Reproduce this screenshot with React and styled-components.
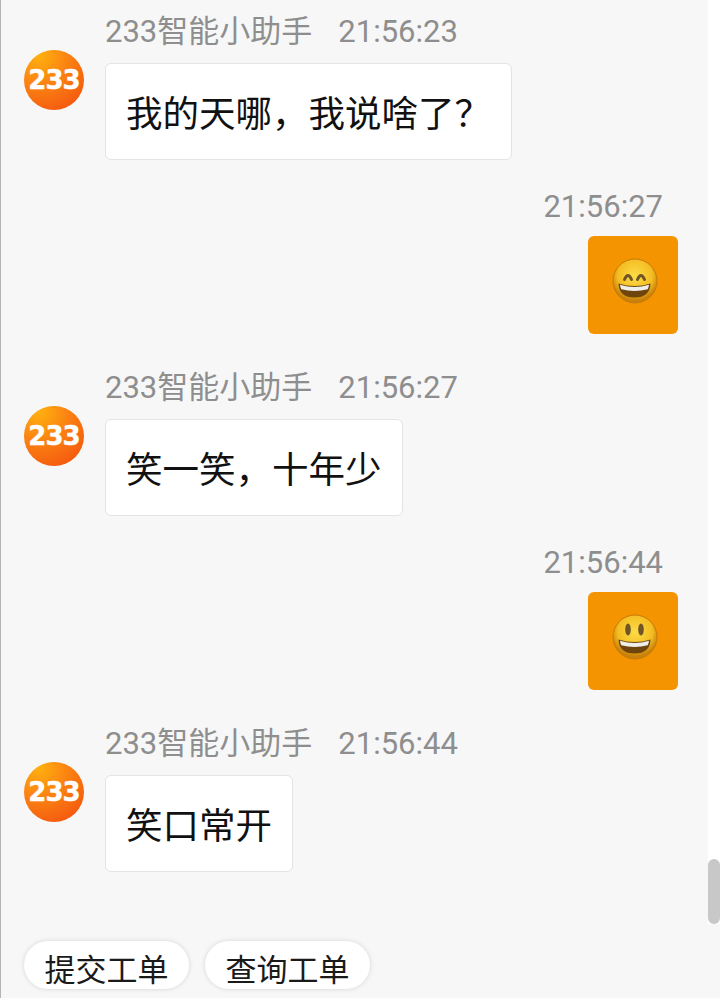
import React from "react";
import styled, { createGlobalStyle } from "styled-components";

const Global = createGlobalStyle`
  html, body { margin: 0; padding: 0; background: #f7f7f7; }
  body { width: 720px; height: 998px; overflow: hidden; font-family: Roboto, "Noto Sans CJK SC", sans-serif; }
`;

const Page = styled.div`
  position: relative;
  width: 720px;
  height: 998px;
  box-sizing: border-box;
  overflow: hidden;
  background: #f7f7f7;
  border-left: 1px solid #b4b4b4;
  display: flex;
  flex-direction: column;
`;

const Thread = styled.div`
  display: flex;
  flex-direction: column;
  height: 941px;
  box-sizing: border-box;
  padding: 12px 0 0 23px;
`;

const BotRow = styled.div`
  display: flex;
  gap: 21px;
  height: 174px;
`;

const AvatarWrap = styled.div`
  width: 60px;
  height: 60px;
  margin-top: 38px;
  flex: none;
`;

const AvatarDisc = styled.div`
  width: 60px;
  height: 60px;
  border-radius: 50%;
  background: radial-gradient(circle at 25% 10%, #ffb00f 0%, #fb8412 40%, #f4590f 85%);
  color: #fff;
  display: flex;
  align-items: center;
  justify-content: center;
  font: 700 26px/1 "DejaVu Sans", sans-serif;
  letter-spacing: -1px;
  -webkit-text-stroke: 0.4px #fff;
`;

const BotBody = styled.div`
  display: flex;
  flex-direction: column;
  align-items: flex-start;
`;

const Meta = styled.div`
  display: flex;
  gap: 26px;
  height: 39px;
  line-height: 39px;
  font-size: 31px;
  color: #8e8e8e;
  white-space: nowrap;
`;

const Bubble = styled.div`
  box-sizing: border-box;
  height: 97px;
  margin-top: 12px;
  padding: 0 20px;
  display: flex;
  align-items: center;
  background: #fff;
  border: 1px solid #e4e4e4;
  border-radius: 6px;
  font-size: 36.5px;
  color: #111;
  white-space: nowrap;
`;

const UserRow = styled.div`
  display: flex;
  flex-direction: column;
  align-items: flex-end;
  height: 182px;
  padding-right: 42px;
`;

const UserTime = styled.div`
  height: 39px;
  line-height: 39px;
  margin-top: 1px;
  margin-right: 15px;
  font-size: 31px;
  color: #8e8e8e;
`;

const EmojiBubble = styled.div`
  width: 90px;
  height: 98px;
  margin-top: 10px;
  border-radius: 6px;
  background: #f49400;
  display: flex;
  align-items: center;
  justify-content: center;
  padding: 0 0 8px 4px;
  box-sizing: border-box;
`;

const QuickBar = styled.div`
  display: flex;
  gap: 16px;
  padding-left: 23px;
`;

const QuickButton = styled.div`
  box-sizing: border-box;
  width: 165px;
  height: 48px;
  border-radius: 24px;
  background: #fff;
  box-shadow: 0 0 5px rgba(0, 0, 0, 0.14);
  font-size: 31px;
  line-height: 60px;
  text-align: center;
  color: #1a1a1a;
  overflow: hidden;
  white-space: nowrap;
`;

const ScrollTrack = styled.div`
  position: absolute;
  left: 707px;
  top: 0;
  width: 12px;
  height: 924px;
  background: #fff;
`;

const ScrollThumb = styled.div`
  position: absolute;
  left: 707px;
  top: 859px;
  width: 12px;
  height: 65px;
  border-radius: 6px;
  background: #c8c8c8;
`;

function Face({ kind, id }) {
  return (
    <svg width="46" height="46" viewBox="0 0 46 46">
      <defs>
        <radialGradient id={id} cx="50%" cy="38%" r="56%">
          <stop offset="0%" stopColor="#fddc48" />
          <stop offset="70%" stopColor="#f4bd22" />
          <stop offset="100%" stopColor="#c9800a" />
        </radialGradient>
        <filter id={`${id}-soft`} x="-10%" y="-10%" width="120%" height="120%">
          <feGaussianBlur stdDeviation="0.6" />
        </filter>
      </defs>
      <g filter={`url(#${id}-soft)`}>
        <circle cx="23" cy="23" r="22" fill={`url(#${id})`} stroke="#c47a08" strokeWidth="1" />
        {kind === "grin" ? (
          <g fill="none" stroke="#6f5526" strokeWidth="3" strokeLinecap="round">
            <path d="M12.500 21.500q3.500-8 7 0" />
            <path d="M25.500 21.500q3.500-8 7 0" />
          </g>
        ) : (
          <g fill="#6f5526">
            <ellipse cx="16" cy="15.500" rx="2.800" ry="6" />
            <ellipse cx="29" cy="15.500" rx="2.800" ry="6" />
          </g>
        )}
        <path d="M6.500 25.500q16 5 32 0q-.5 14-16 14T6.500 25.500z" fill="#6d4510" />
        <path d="M8 26.700q14.500 4.500 29 0q-.2 2.800-1.300 4.500q-13.200 3.500-26.400 0Q8.200 29.500 8 26.700z" fill="#eeeeea" />
      </g>
    </svg>
  );
}

function BotMessage({ time, text }) {
  return (
    <BotRow>
      <AvatarWrap>
        <AvatarDisc>233</AvatarDisc>
      </AvatarWrap>
      <BotBody>
        <Meta>
          <span>233智能小助手</span>
          <span>{time}</span>
        </Meta>
        <Bubble>{text}</Bubble>
      </BotBody>
    </BotRow>
  );
}

function UserMessage({ time, kind, id }) {
  return (
    <UserRow>
      <UserTime>{time}</UserTime>
      <EmojiBubble>
        <Face kind={kind} id={id} />
      </EmojiBubble>
    </UserRow>
  );
}

export default function App() {
  return (
    <Page>
      <Global />
      <Thread>
        <BotMessage time="21:56:23" text="我的天哪，我说啥了？" />
        <UserMessage time="21:56:27" kind="grin" id="faceA" />
        <BotMessage time="21:56:27" text="笑一笑，十年少" />
        <UserMessage time="21:56:44" kind="smile" id="faceB" />
        <BotMessage time="21:56:44" text="笑口常开" />
      </Thread>
      <QuickBar>
        <QuickButton>提交工单</QuickButton>
        <QuickButton>查询工单</QuickButton>
      </QuickBar>
      <ScrollTrack />
      <ScrollThumb />
    </Page>
  );
}
